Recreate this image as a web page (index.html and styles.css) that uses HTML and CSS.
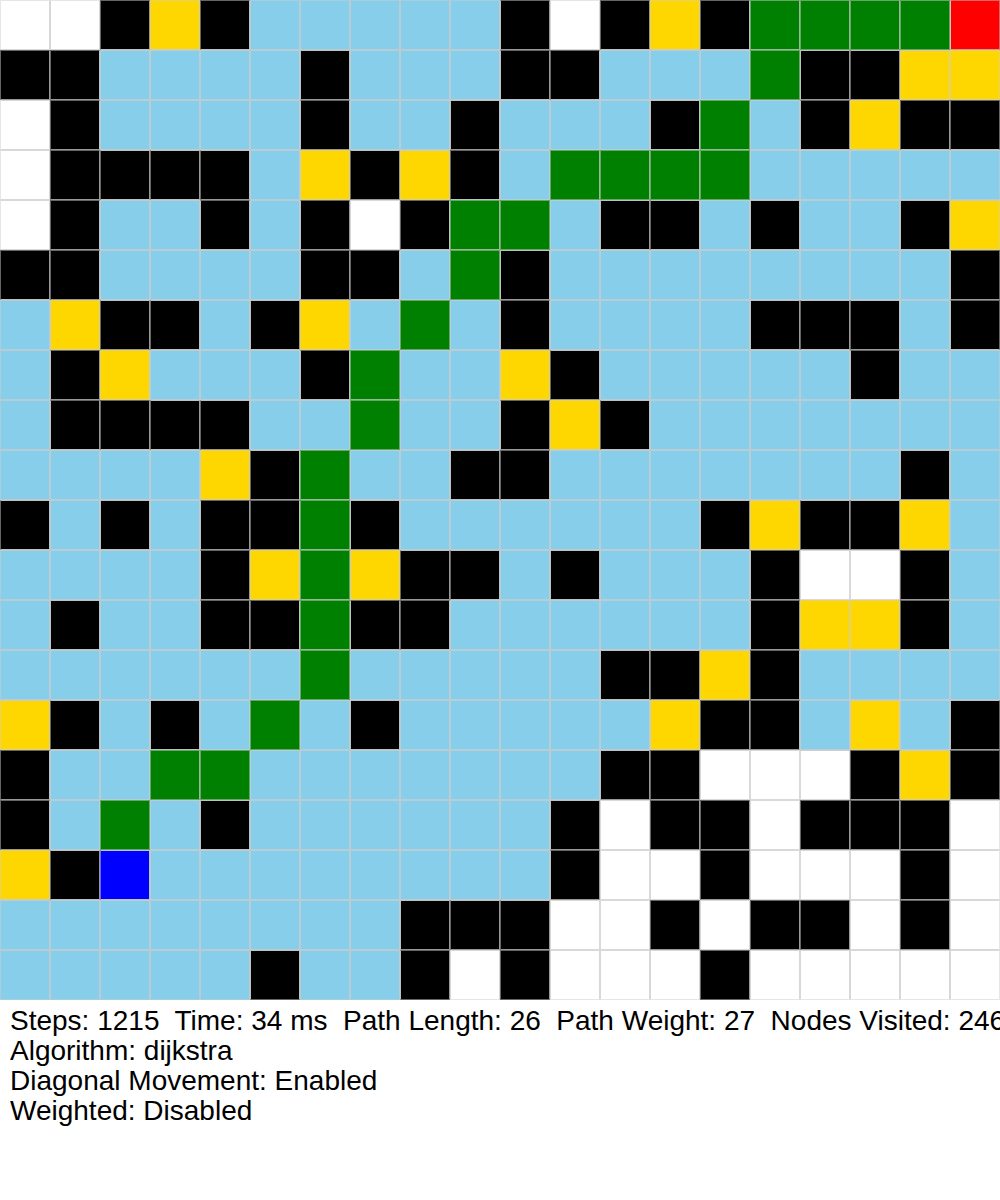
FILE: index.html
```html
<!DOCTYPE html>
<html lang="en">
<head>
<meta charset="utf-8">
<meta name="viewport" content="width=device-width, initial-scale=1">
<title>Pathfinding Visualizer</title>
<link rel="stylesheet" href="styles.css">
</head>
<body>
<main>
  <div class="grid" id="grid" role="img" aria-label="Path search grid"></div>
  <section class="status">
    <p class="line">Steps: 1215  Time: 34 ms  Path Length: 26  Path Weight: 27  Nodes Visited: 246</p>
    <p class="line">Algorithm: dijkstra</p>
    <p class="line">Diagonal Movement: Enabled</p>
    <p class="line">Weighted: Disabled</p>
  </section>
</main>
<script src="grid.js"></script>
</body>
</html>
```
FILE: styles.css
```css
body {
  margin: 0;
  background: #fff;
  color: #000;
  font-family: "Liberation Sans", Arial, sans-serif;
}

main {
  overflow: hidden;
}

.grid {
  display: grid;
  grid-template-columns: repeat(20, 1fr);
}

.cell {
  box-sizing: border-box;
  aspect-ratio: 1;
  border: 1px solid rgb(204 204 204 / 75%);
  border-top-color: rgb(204 204 204 / 50%);
  border-left-color: rgb(204 204 204 / 50%);
}

.empty { background-color: #fff; border-color: rgb(204 204 204 / 75%); }
.wall { background-color: #000; }
.weight { background-color: #ffd700; }
.visited { background-color: #87ceeb; border-color: rgb(204 204 204 / 75%); }
.path { background-color: #008000; border-color: rgb(204 204 204 / 50%); }
.start { background-color: #00f; }
.goal { background-color: #f00; }

.worn-top { border-top-color: rgb(204 204 204 / 94%); }
.worn-right { border-right-color: rgb(204 204 204 / 94%); }
.worn-bottom { border-bottom-color: rgb(204 204 204 / 94%); }
.worn-left { border-left-color: rgb(204 204 204 / 94%); }

/* Lines between two path cells. */
.joined-right { border-right-color: rgb(204 204 204 / 75%); }
.joined-bottom { border-bottom-color: rgb(204 204 204 / 75%); }

.edge-top { border-top-color: rgb(204 204 204 / 50%); }
.edge-right { border-right-color: rgb(204 204 204 / 50%); }
.edge-bottom { border-bottom-color: rgb(204 204 204 / 50%); }
.edge-left { border-left-color: rgb(204 204 204 / 50%); }

.status {
  padding: 6px 10px;
}

.line {
  margin: 0;
  font-size: 28px;
  line-height: 30px;
  white-space: pre;
}
```
FILE: grid.js
```js
const rows = [
  "wwbybsssssbwbybggggr",
  "bbssssbsssbbsssgbbyy",
  "wbssssbssbsssbgsbybb",
  "wbbbbsybybsggggsssss",
  "wbssbsbwbggsbbsbssby",
  "bbssssbbsgbssssssssb",
  "sybbsbysgsbssssbbbsb",
  "sbysssbgssybsssssbss",
  "sbbbbssgssbybsssssss",
  "ssssybgssbbsssssssbs",
  "bsbsbbgbssssssbybbys",
  "ssssbygybbsbsssbwwbs",
  "sbssbbgbbssssssbyybs",
  "ssssssgsssssbbybssss",
  "ybsbsgsbsssssybbsysb",
  "bssggsssssssbbwwwbyb",
  "bsgsbssssssbwbbwbbbw",
  "ybessssssssbwwbwwwbw",
  "ssssssssbbbwwbwbbwbw",
  "sssssbssbwbwwwbwwwww",
];

const kinds = {
  w: "empty", b: "wall", y: "weight", s: "visited",
  g: "path", e: "start", r: "goal",
};

const sides = [["top", -1, 0], ["right", 0, 1], ["bottom", 1, 0], ["left", 0, -1]];

const grid = document.getElementById("grid");
rows.forEach((row, y) => {
  [...row].forEach((code, x) => {
    const cell = document.createElement("div");
    cell.classList.add("cell", kinds[code]);
    for (const [side, dy, dx] of sides) {
      const neighbour = rows[y + dy]?.[x + dx];
      if (!neighbour) {
        cell.classList.add(`edge-${side}`);
      } else if (code === "g" && neighbour === "g") {
        cell.classList.add(`joined-${side}`);
      } else if ("sg".includes(neighbour) && code !== "g" && code !== "s") {
        cell.classList.add(`worn-${side}`);
      }
    }
    grid.append(cell);
  });
});
```
